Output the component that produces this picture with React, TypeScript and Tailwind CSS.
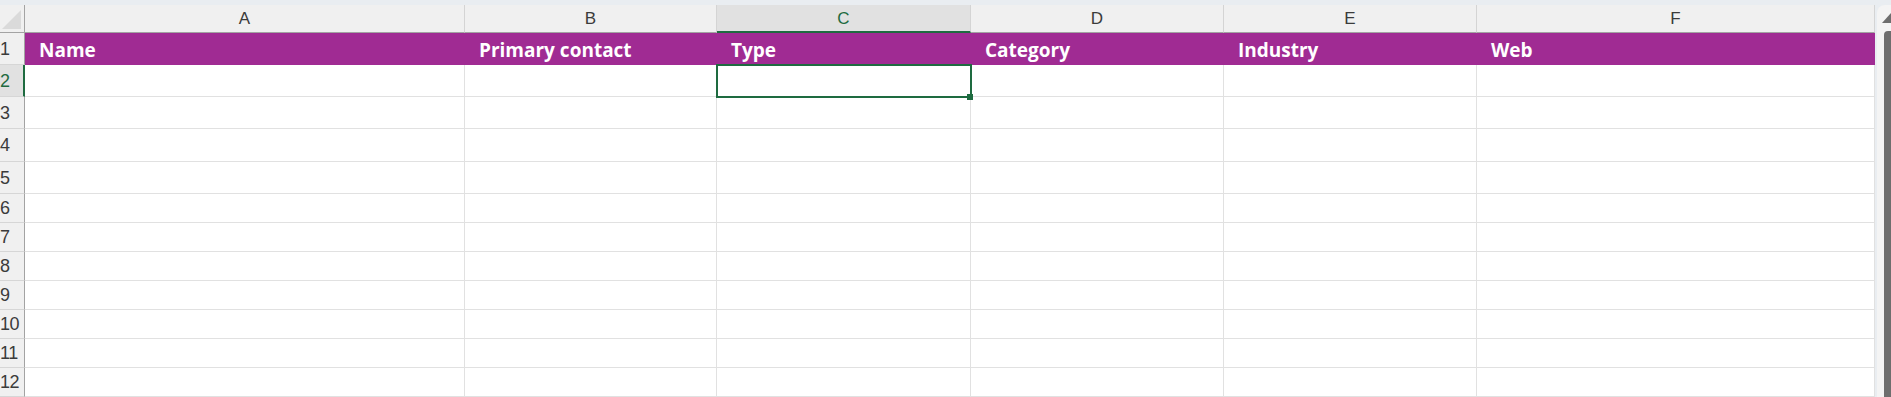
import React from 'react';

const columns = [
  { key: 'A', width: 'w-[440px]', title: 'Name' },
  { key: 'B', width: 'w-[252px]', title: 'Primary contact' },
  { key: 'C', width: 'w-[254px]', title: 'Type' },
  { key: 'D', width: 'w-[253px]', title: 'Category' },
  { key: 'E', width: 'w-[253px]', title: 'Industry' },
  { key: 'F', width: 'w-[398px]', title: 'Web' },
];

// row heights as they appear on screen (incl. bottom gridline)
const rowHeights: Record<number, string> = {
  2: 'h-[32px]',
  3: 'h-[32px]',
  4: 'h-[33px]',
  5: 'h-[32px]',
  6: 'h-[29px]',
  7: 'h-[29px]',
  8: 'h-[29px]',
  9: 'h-[29px]',
  10: 'h-[29px]',
  11: 'h-[29px]',
  12: 'h-[29px]',
};

const GREEN = 'text-[#1e6b40]';

function RowHeader({ n, selected }: { n: number; selected?: boolean }) {
  return (
    <div
      className={`w-[25px] shrink-0 overflow-hidden flex items-center border-b border-[#d6d6d6] ${
        selected
          ? `bg-[#e1e1e1] border-r-2 border-r-[#1e6b40] ${GREEN}`
          : 'bg-[#f0f0f0] border-r border-r-[#a3a3a3] text-[#3b3b3b]'
      }`}
    >
      <span className="text-[18px] leading-none whitespace-nowrap tracking-[-0.5px]">{n}</span>
    </div>
  );
}

export default function App() {
  const dataRows = [2, 3, 4, 5, 6, 7, 8, 9, 10, 11, 12];

  return (
    <div
      className="w-[1891px] h-[397px] overflow-hidden bg-[#e9edf1] pt-[5px] flex"
      style={{ fontFamily: '"Liberation Sans", Arial, sans-serif' }}
    >
      {/* Sheet */}
      <div className="w-[1875px] shrink-0 flex flex-col bg-white">
        {/* Column headers */}
        <div className="flex h-[28px] shrink-0">
          <div className="w-[25px] shrink-0 bg-[#f0f0f0] border-b border-r border-[#a3a3a3] flex items-end justify-end pr-[3px] pb-[3px]">
            <svg width="19" height="19" viewBox="0 0 19 19">
              <polygon points="19,0 19,19 0,19" fill="#dadada" />
            </svg>
          </div>
          {columns.map((c) => {
            const sel = c.key === 'C';
            return (
              <div
                key={c.key}
                className={`${c.width} shrink-0 flex items-center justify-center text-[17px] border-r border-r-[#d4d4d4] ${
                  sel
                    ? `bg-[#e1e1e1] border-b-2 border-b-[#1e6b40] ${GREEN}`
                    : 'bg-[#f0f0f0] border-b border-b-[#a3a3a3] text-[#3b3b3b]'
                }`}
              >
                <span className="pt-[1px]">{c.key}</span>
              </div>
            );
          })}
        </div>

        {/* Row 1: table header */}
        <div className="flex h-[32px] shrink-0">
          <RowHeader n={1} />
          {columns.map((c) => (
            <div
              key={c.key}
              className={`${c.width} shrink-0 bg-[#a02b93] flex items-center pl-[14px]`}
            >
              <span
                className="text-white font-bold text-[19px] leading-none pt-[2px]"
                style={{ fontFamily: '"Open Sans", sans-serif' }}
              >
                {c.title}
              </span>
            </div>
          ))}
        </div>

        {/* Empty rows */}
        {dataRows.map((n) => (
          <div key={n} className={`flex shrink-0 ${rowHeights[n]}`}>
            <RowHeader n={n} selected={n === 2} />
            {columns.map((c) => (
              <div
                key={c.key}
                className={`${c.width} shrink-0 border-r border-b border-[#e1e1e1] relative`}
              >
                {n === 2 && c.key === 'C' && (
                  <>
                    <div className="absolute -left-[1px] -top-[1px] w-[256px] h-[34px] border-2 border-[#1e6b40] z-10" />
                    <div className="absolute left-[250px] top-[29px] w-[6px] h-[6px] bg-[#1e6b40] z-20" />
                  </>
                )}
              </div>
            ))}
          </div>
        ))}
      </div>

      {/* Vertical scrollbar */}
      <div className="flex-1 pl-[2px] flex">
        <div className="flex-1 bg-[#f4f4f4] rounded-tl-[8px] flex flex-col items-end pt-[8px]">
          <svg width="9" height="10" viewBox="0 0 9 10" className="shrink-0">
            <polygon points="0,10 9,0 9,10" fill="#6e6e6e" />
          </svg>
          <div className="mt-[8px] w-[7px] flex-1 bg-[#6e6e6e] rounded-tl-[4px]" />
        </div>
      </div>
    </div>
  );
}
